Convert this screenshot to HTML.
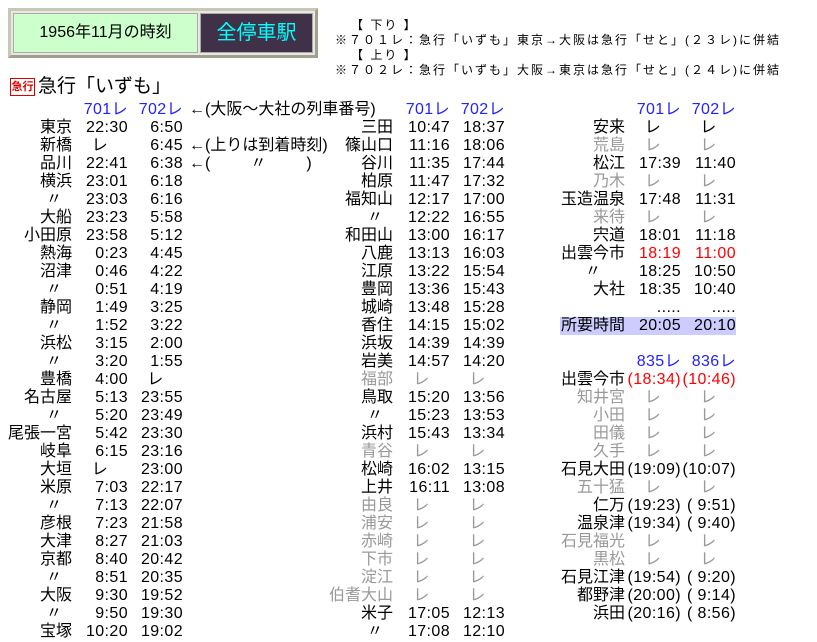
<!DOCTYPE html>
<html><head><meta charset="utf-8">
<style>
body{margin:0;width:817px;height:642px;background:#fff;position:relative;overflow:hidden;font-family:"Liberation Sans","Noto Sans CJK JP",sans-serif;color:#000}
.abs{position:absolute}
table{border-collapse:collapse;position:absolute;font-size:16px}
td{height:18px;line-height:18px;padding:0;white-space:nowrap;text-align:right;vertical-align:middle}
td+td{letter-spacing:0.4px}
td+td+td+td{letter-spacing:0}
.g{color:#999}
.b{color:#22f}
.r{color:#f00}
.c{text-align:center}
.d{text-align:right;padding-right:10px}
.hl td{background:#ccccff}
</style></head><body>
<div class="abs" style="left:8px;top:8px;width:304px;height:44px;border:3px solid #c8c8b8;border-right-color:#a0a090;border-bottom-color:#a0a090;background:#e8e8e0"></div>
<div class="abs" style="left:13px;top:13px;width:183px;height:38px;background:#ccffcc;border:1px solid #aaa;font-size:16px;line-height:38px;text-align:center">1956年11月の時刻</div>
<div class="abs" style="left:200px;top:13px;width:111px;height:38px;background:#403048;border:1px solid #aaa;color:#00ffff;font-size:20px;line-height:38px;text-align:center">全停車駅</div>
<div class="abs" style="left:335px;top:18px;font-size:12px;line-height:15px;white-space:pre;letter-spacing:2px">   【 下り 】
※７０１レ：急行「いずも」東京→大阪は急行「せと」(２３レ)に併結
   【 上り 】
※７０２レ：急行「いずも」大阪→東京は急行「せと」(２４レ)に併結</div>
<div class="abs" style="left:10px;top:78px;width:23px;height:16px;border:1px solid #d00;color:#d00;font-size:11px;line-height:16px;text-align:center;font-weight:bold">急行</div>
<div class="abs" style="left:38px;top:75px;font-size:19px;line-height:24px">急行「いずも」</div>

<table style="left:0;top:101px">
<colgroup><col style="width:72px"><col style="width:56px"><col style="width:55px"><col style="width:160px"></colgroup>
<tr><td></td><td class="b">701レ</td><td class="b">702レ</td><td style="text-align:left;padding-left:6px">←(大阪～大社の列車番号)</td></tr>
<tr><td>東京</td><td>22:30</td><td>6:50</td><td></td></tr>
<tr><td>新橋</td><td class="c">レ</td><td>6:45</td><td style="text-align:left;padding-left:6px">←(上りは到着時刻)</td></tr>
<tr><td>品川</td><td>22:41</td><td>6:38</td><td style="text-align:left;padding-left:6px;white-space:pre">←(         〃         )</td></tr>
<tr><td>横浜</td><td>23:01</td><td>6:18</td><td></td></tr>
<tr><td class="d">〃</td><td>23:03</td><td>6:16</td><td></td></tr>
<tr><td>大船</td><td>23:23</td><td>5:58</td><td></td></tr>
<tr><td>小田原</td><td>23:58</td><td>5:12</td><td></td></tr>
<tr><td>熱海</td><td>0:23</td><td>4:45</td><td></td></tr>
<tr><td>沼津</td><td>0:46</td><td>4:22</td><td></td></tr>
<tr><td class="d">〃</td><td>0:51</td><td>4:19</td><td></td></tr>
<tr><td>静岡</td><td>1:49</td><td>3:25</td><td></td></tr>
<tr><td class="d">〃</td><td>1:52</td><td>3:22</td><td></td></tr>
<tr><td>浜松</td><td>3:15</td><td>2:00</td><td></td></tr>
<tr><td class="d">〃</td><td>3:20</td><td>1:55</td><td></td></tr>
<tr><td>豊橋</td><td>4:00</td><td class="c">レ</td><td></td></tr>
<tr><td>名古屋</td><td>5:13</td><td>23:55</td><td></td></tr>
<tr><td class="d">〃</td><td>5:20</td><td>23:49</td><td></td></tr>
<tr><td>尾張一宮</td><td>5:42</td><td>23:30</td><td></td></tr>
<tr><td>岐阜</td><td>6:15</td><td>23:16</td><td></td></tr>
<tr><td>大垣</td><td class="c">レ</td><td>23:00</td><td></td></tr>
<tr><td>米原</td><td>7:03</td><td>22:17</td><td></td></tr>
<tr><td class="d">〃</td><td>7:13</td><td>22:07</td><td></td></tr>
<tr><td>彦根</td><td>7:23</td><td>21:58</td><td></td></tr>
<tr><td>大津</td><td>8:27</td><td>21:03</td><td></td></tr>
<tr><td>京都</td><td>8:40</td><td>20:42</td><td></td></tr>
<tr><td class="d">〃</td><td>8:51</td><td>20:35</td><td></td></tr>
<tr><td>大阪</td><td>9:30</td><td>19:52</td><td></td></tr>
<tr><td class="d">〃</td><td>9:50</td><td>19:30</td><td></td></tr>
<tr><td>宝塚</td><td>10:20</td><td>19:02</td><td></td></tr>
</table>

<table style="left:300px;top:101px">
<colgroup><col style="width:93px"><col style="width:57px"><col style="width:55px"></colgroup>
<tr><td></td><td class="b">701レ</td><td class="b">702レ</td></tr>
<tr><td>三田</td><td>10:47</td><td>18:37</td></tr>
<tr><td>篠山口</td><td>11:16</td><td>18:06</td></tr>
<tr><td>谷川</td><td>11:35</td><td>17:44</td></tr>
<tr><td>柏原</td><td>11:47</td><td>17:32</td></tr>
<tr><td>福知山</td><td>12:17</td><td>17:00</td></tr>
<tr><td class="d">〃</td><td>12:22</td><td>16:55</td></tr>
<tr><td>和田山</td><td>13:00</td><td>16:17</td></tr>
<tr><td>八鹿</td><td>13:13</td><td>16:03</td></tr>
<tr><td>江原</td><td>13:22</td><td>15:54</td></tr>
<tr><td>豊岡</td><td>13:36</td><td>15:43</td></tr>
<tr><td>城崎</td><td>13:48</td><td>15:28</td></tr>
<tr><td>香住</td><td>14:15</td><td>15:02</td></tr>
<tr><td>浜坂</td><td>14:39</td><td>14:39</td></tr>
<tr><td>岩美</td><td>14:57</td><td>14:20</td></tr>
<tr class="g"><td>福部</td><td class="c">レ</td><td class="c">レ</td></tr>
<tr><td>鳥取</td><td>15:20</td><td>13:56</td></tr>
<tr><td class="d">〃</td><td>15:23</td><td>13:53</td></tr>
<tr><td>浜村</td><td>15:43</td><td>13:34</td></tr>
<tr class="g"><td>青谷</td><td class="c">レ</td><td class="c">レ</td></tr>
<tr><td>松崎</td><td>16:02</td><td>13:15</td></tr>
<tr><td>上井</td><td>16:11</td><td>13:08</td></tr>
<tr class="g"><td>由良</td><td class="c">レ</td><td class="c">レ</td></tr>
<tr class="g"><td>浦安</td><td class="c">レ</td><td class="c">レ</td></tr>
<tr class="g"><td>赤崎</td><td class="c">レ</td><td class="c">レ</td></tr>
<tr class="g"><td>下市</td><td class="c">レ</td><td class="c">レ</td></tr>
<tr class="g"><td>淀江</td><td class="c">レ</td><td class="c">レ</td></tr>
<tr class="g"><td>伯耆大山</td><td class="c">レ</td><td class="c">レ</td></tr>
<tr><td>米子</td><td>17:05</td><td>12:13</td></tr>
<tr><td class="d">〃</td><td>17:08</td><td>12:10</td></tr>
</table>

<table style="left:560px;top:101px">
<colgroup><col style="width:65px"><col style="width:56px"><col style="width:55px"></colgroup>
<tr><td></td><td class="b">701レ</td><td class="b">702レ</td></tr>
<tr><td>安来</td><td class="c">レ</td><td class="c">レ</td></tr>
<tr class="g"><td>荒島</td><td class="c">レ</td><td class="c">レ</td></tr>
<tr><td>松江</td><td>17:39</td><td>11:40</td></tr>
<tr class="g"><td>乃木</td><td class="c">レ</td><td class="c">レ</td></tr>
<tr><td>玉造温泉</td><td>17:48</td><td>11:31</td></tr>
<tr class="g"><td>来待</td><td class="c">レ</td><td class="c">レ</td></tr>
<tr><td>宍道</td><td>18:01</td><td>11:18</td></tr>
<tr><td>出雲今市</td><td class="r">18:19</td><td class="r">11:00</td></tr>
<tr><td class="d" style="padding-right:24px">〃</td><td>18:25</td><td>10:50</td></tr>
<tr><td>大社</td><td>18:35</td><td>10:40</td></tr>
<tr><td></td><td>.....</td><td>.....</td></tr>
<tr class="hl"><td>所要時間</td><td>20:05</td><td>20:10</td></tr>
<tr><td></td><td></td><td></td></tr>
<tr><td></td><td class="b">835レ</td><td class="b">836レ</td></tr>
<tr><td>出雲今市</td><td class="r">(18:34)</td><td class="r">(10:46)</td></tr>
<tr class="g"><td>知井宮</td><td class="c">レ</td><td class="c">レ</td></tr>
<tr class="g"><td>小田</td><td class="c">レ</td><td class="c">レ</td></tr>
<tr class="g"><td>田儀</td><td class="c">レ</td><td class="c">レ</td></tr>
<tr class="g"><td>久手</td><td class="c">レ</td><td class="c">レ</td></tr>
<tr><td>石見大田</td><td>(19:09)</td><td>(10:07)</td></tr>
<tr class="g"><td>五十猛</td><td class="c">レ</td><td class="c">レ</td></tr>
<tr><td>仁万</td><td>(19:23)</td><td>( 9:51)</td></tr>
<tr><td>温泉津</td><td>(19:34)</td><td>( 9:40)</td></tr>
<tr class="g"><td>石見福光</td><td class="c">レ</td><td class="c">レ</td></tr>
<tr class="g"><td>黒松</td><td class="c">レ</td><td class="c">レ</td></tr>
<tr><td>石見江津</td><td>(19:54)</td><td>( 9:20)</td></tr>
<tr><td>都野津</td><td>(20:00)</td><td>( 9:14)</td></tr>
<tr><td>浜田</td><td>(20:16)</td><td>( 8:56)</td></tr>
</table>
</body></html>
